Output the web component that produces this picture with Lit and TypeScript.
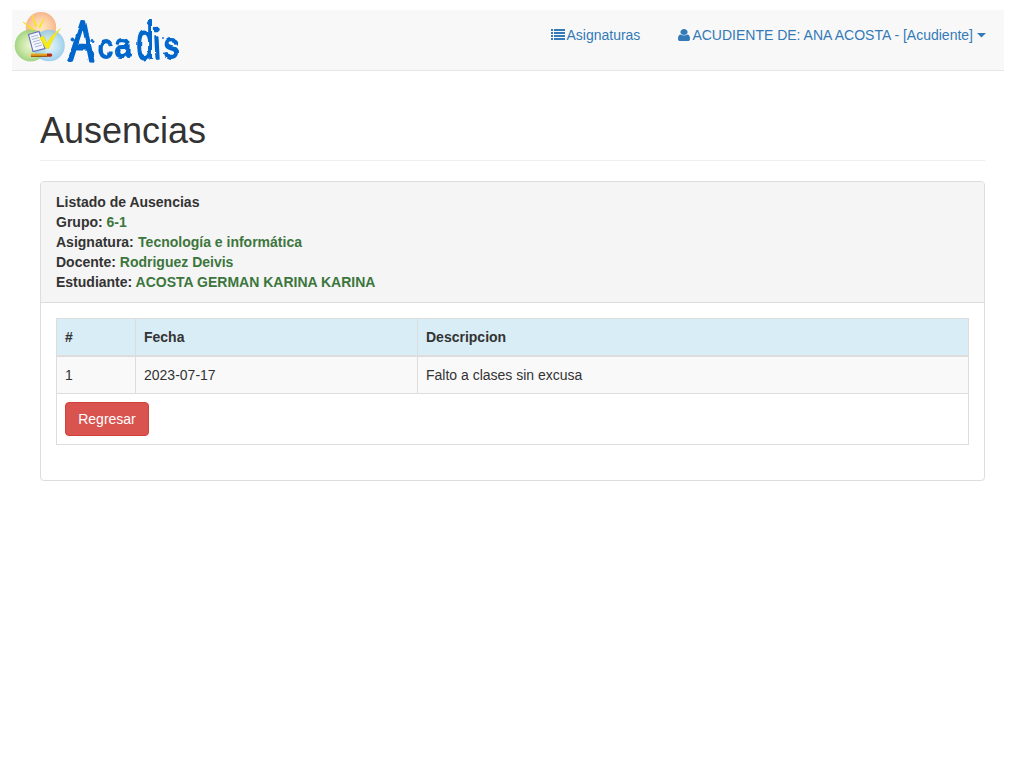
import { LitElement, html, css } from "lit";
import { customElement } from "lit/decorators.js";

@customElement("acadis-logo")
class AcadisLogo extends LitElement {
  static styles = css`
    :host { display: block; width: 170px; height: 60px; }
    svg { display: block; overflow: visible; }
    .word { fill: #0567cd; stroke: #0567cd; stroke-linejoin: round; }
    text { font-family: "Liberation Sans", Arial, sans-serif; font-weight: 400; stroke-width: 1.8; }
    .cap { stroke-width: 2.800; }
  `;
  render() {
    return html`
      <svg width="170" height="60" viewBox="0 0 170 60">
        <defs>
          <radialGradient id="o"><stop offset="0" stop-color="#ffe9c0" /><stop offset=".65" stop-color="#fbcba2" /><stop offset="1" stop-color="#f7b68c" /></radialGradient>
          <radialGradient id="g"><stop offset="0" stop-color="#eef8cc" /><stop offset=".6" stop-color="#bfe398" /><stop offset="1" stop-color="#97cf72" /></radialGradient>
          <radialGradient id="b"><stop offset="0" stop-color="#e6f6fd" /><stop offset=".6" stop-color="#b4def3" /><stop offset="1" stop-color="#8fc8e8" /></radialGradient>
          <filter id="ink" x="-5%" y="-5%" width="110%" height="110%">
            <feTurbulence type="fractalNoise" baseFrequency=".13" numOctaves="1" seed="4" />
            <feDisplacementMap in="SourceGraphic" scale="3.500" xChannelSelector="R" yChannelSelector="G" />
          </filter>
        </defs>
        <circle cx="29" cy="17.300" r="15.200" fill="url(#o)" />
        <circle cx="18.700" cy="35.500" r="16" fill="url(#g)" fill-opacity=".88" />
        <circle cx="37" cy="35.500" r="15.800" fill="url(#b)" fill-opacity=".85" />
        <path d="M11 12l10.500 7-1 1zM20 5l5 11-1.500 .5zM32 9l-4 9-1-1z" fill="#f5e51b" stroke="#f5e51b" stroke-width=".8" />
        <path d="M16.500 24.500l10.500-3 6 17-12 3z" fill="#f4f6ff" stroke="#6672b8" stroke-width="1.100" />
        <path d="M19 27l7-2M20 29.500l7-2M21 32l7-2M22 34.500l7-2M23 37l7-2" stroke="#a3add2" stroke-width=".9" />
        <path d="M27.500 27.500l4-1.500 3.500 7q4-8 13.500-14.500-7 8-11.500 20h-3z" fill="#f6ea1c" stroke="#e0d825" stroke-width=".5" />
        <path d="M16 45.200l3.500-1.500v3z" fill="#f1cf91" />
        <path d="M19 43.600h16v3.200H19z" fill="#e8a11c" />
        <path d="M19 45.800h16v1H19z" fill="#8b4a08" />
        <path d="M35 43.600h4q2.500 1.600 0 3.200h-4z" fill="#b72c16" />
        <g class="word" filter="url(#ink)">
          <text class="cap" transform="translate(56.500 50) rotate(3) scale(.63 .95)" font-size="60">A</text>
          <text transform="translate(86 47.500) scale(.87 1)" font-size="34">c</text>
          <text transform="translate(102.500 47) scale(.88 1)" font-size="34">a</text>
          <text transform="translate(124.500 49) scale(.6 1)" font-size="51">d</text>
          <text transform="translate(142 49) rotate(-3) scale(.75 1)" font-size="43">i</text>
          <text transform="translate(152 48) scale(.82 1)" font-size="35">s</text>
          <circle cx="58" cy="49.500" r="2.200" />
          <circle cx="60.500" cy="29.500" r="1.500" />
          <circle cx="81" cy="31.500" r="1" />
          <circle cx="137.500" cy="13" r="2" />
          <circle cx="145.500" cy="19.500" r="1.800" />
          <circle cx="128" cy="27" r="1" />
          <circle cx="151" cy="28" r=".5" />
        </g>
      </svg>
    `;
  }
}

@customElement("app-root")
class AppRoot extends LitElement {
  static styles = css`
    :host { display: block; box-sizing: border-box; padding: 10px 20px 0 12px; font: 14px/20px "Liberation Sans", Arial, sans-serif; color: #333; background: #fff; }
    * { box-sizing: border-box; }
    .nav { display: flex; justify-content: space-between; height: 61px; background: #f8f8f8; border-bottom: 1px solid #e7e7e7; }
    .links { display: flex; gap: 37px; padding: 15px 18px 0 0; }
    .link { display: flex; height: 20px; color: #337ab7; text-decoration: none; white-space: nowrap; }
    .list { width: 14px; height: 12px; margin: 4px 1px 0 0; }
    .grow { margin-right: 1px; }
    .user { width: 12px; height: 12px; margin: 4px 2px 0 0; }
    .caret { margin: 8px 0 0 3px; width: 10px; height: 5px; }
    .content { padding: 0 19px 0 28px; }
    h1 { margin: 40px 0 20px; height: 50px; font-size: 36px; font-weight: 400; line-height: 39.600px; border-bottom: 1px solid #eee; }
    .panel { height: 300px; border: 1px solid #ddd; border-radius: 4px; box-shadow: 0 1px 1px rgba(0,0,0,.05); }
    .head { height: 121px; padding: 10px 15px; font-weight: 700; background: #f5f5f5; border-bottom: 1px solid #ddd; border-radius: 3px 3px 0 0; }
    .value { color: #3c763d; }
    .wide { margin-left: .4px; }
    .body { padding: 15px; }
    table { width: 100%; table-layout: fixed; border-collapse: collapse; border: 1px solid #ddd; }
    .c1 { width: 79px; }
    .c2 { width: 282px; }
    th, td { padding: 8px; border: 1px solid #ddd; text-align: left; vertical-align: top; }
    th { background: #d9edf7; border-bottom-width: 2px; }
    .odd { background: #f9f9f9; }
    .btn { display: block; width: 84px; height: 34px; margin: 0; padding: 6px 12px; font: inherit; color: #fff; background: #d9534f; border: 1px solid #d43f3a; border-radius: 4px; }
  `;
  private details = [
    ["Grupo:", "6-1"],
    ["Asignatura:", "Tecnología e informática"],
    ["Docente:", "Rodriguez Deivis"],
    ["Estudiante:", "ACOSTA GERMAN KARINA KARINA"],
  ];
  render() {
    return html`
      <nav class="nav">
        <acadis-logo></acadis-logo>
        <div class="links">
          <a class="link grow"><svg class="list" viewBox="0 0 14 12" fill="#337ab7"><path d="M0 0h2v2H0zM3 0h11v2H3zM0 3h2v2H0zM3 3h11v2H3zM0 6h2v2H0zM3 6h11v2H3zM0 9h2v2H0zM3 9h11v2H3z" /></svg>Asignaturas</a>
          <a class="link"><svg class="user" viewBox="256 128 1280 1536" preserveAspectRatio="none" fill="#337ab7"><path d="M1536 1399q0 109-62.500 187t-150.500 78h-854q-88 0-150.500-78t-62.500-187q0-85 8.500-160.500t31.500-152 58.500-131 94-89 134.500-34.500q131 128 313 128t313-128q76 0 134.500 34.500t94 89 58.500 131 31.500 152 8.500 160.500zm-256-887q0 159-112.500 271.500t-271.500 112.500-271.500-112.500-112.500-271.500 112.500-271.500 271.500-112.500 271.500 112.500 112.500 271.500z" /></svg>ACUDIENTE DE: ANA ACOSTA - [Acudiente]<svg class="caret" viewBox="0 0 10 5"><path d="M1 0h9L5.500 4.500z" fill="#337ab7" /></svg></a>
        </div>
      </nav>
      <main class="content">
        <h1>Ausencias</h1>
        <section class="panel">
          <div class="head">
            <div>Listado de Ausencias</div>
            ${this.details.map(([k, v]) => html`<div>${k} <span class="value ${k === "Asignatura:" ? "wide" : ""}">${v}</span></div>`)}
          </div>
          <div class="body">
            <table>
              <colgroup><col class="c1" /><col class="c2" /><col /></colgroup>
              <thead><tr><th>#</th><th>Fecha</th><th>Descripcion</th></tr></thead>
              <tbody>
                <tr class="odd"><td>1</td><td>2023-07-17</td><td>Falto a clases sin excusa</td></tr>
                <tr><td colspan="3"><button class="btn">Regresar</button></td></tr>
              </tbody>
            </table>
          </div>
        </section>
      </main>
    `;
  }
}
